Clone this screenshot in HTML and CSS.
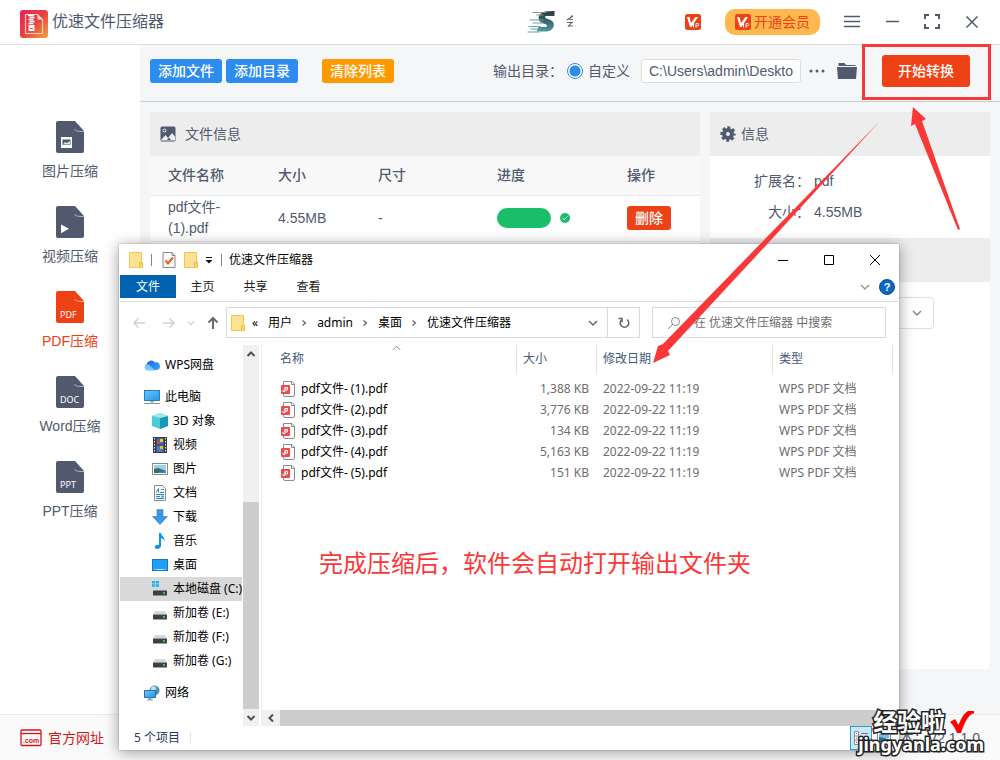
FILE: index.html
```html
<!DOCTYPE html>
<html lang="zh-CN">
<head>
<meta charset="utf-8">
<title>优速文件压缩器</title>
<link rel="stylesheet" href="styles.css">
</head>
<body>
<svg class="defs" aria-hidden="true">
  <defs>
    <linearGradient id="logo-bg" x1="0" y1="0" x2="1" y2="1"><stop offset="0" stop-color="#e5235b"/><stop offset=".5" stop-color="#e8413f"/><stop offset="1" stop-color="#f3a63b"/></linearGradient>
    <linearGradient id="speed" x1="0" y1="0" x2="0" y2="1"><stop offset="0" stop-color="#27343c"/><stop offset="1" stop-color="#4f9a9c"/></linearGradient>
    <linearGradient id="cloud" x1="0" y1="0" x2="1" y2="1"><stop offset="0" stop-color="#1b5fe0"/><stop offset="1" stop-color="#35a8ff"/></linearGradient>
    <linearGradient id="screen" x1="0" y1="0" x2="1" y2="1"><stop offset="0" stop-color="#6cc6ff"/><stop offset="1" stop-color="#1f96ea"/></linearGradient>
    <symbol id="doc" viewBox="0 0 28 32"><path fill="currentColor" d="M2 0h17l9 10v20a2 2 0 0 1-2 2H2a2 2 0 0 1-2-2V2a2 2 0 0 1 2-2z"/><path d="M18.500 8c1.500 2.200 3 2.500 9.500 2.500" fill="none" stroke="#fff" stroke-width=".7" opacity=".8"/></symbol>
    <symbol id="vip" viewBox="0 0 16 16"><rect width="16" height="16" rx="2.500" fill="#ee4115"/><path d="M2 3h2.500l1.500 6 4.500-6H13L6.500 13H5z" fill="#fff"/><path d="M8.500 13.500v-4M11 13.500v-4h1.500q1.300 0 1.300 1.100t-1.300 1.200H11" fill="none" stroke="#fff"/></symbol>
    <symbol id="folder" viewBox="0 0 14 16"><path d="M.5 .5h12v9l1 1v5H.5z" fill="#fde295" stroke="#efc84a"/><path d="M10.500 15.500v-5h3v5" fill="#f7d673" stroke="#e8bf3f"/></symbol>
    <symbol id="pdf" viewBox="0 0 16 16"><path d="M3.500 .5h8.500l2.500 2.500v11q0 1.500-1.500 1.500H5q-1.500 0-1.500-1.500z" fill="#fff" stroke="#8b8b8b"/><path d="M11.500 1v2.500H14" fill="none" stroke="#8b8b8b"/><rect x="1" y="4" width="9" height="9" rx="1" fill="#ea4c50"/><path d="M5 6.500h2.500v2.500H5zM5 6.500v4H3V9" fill="none" stroke="#fff"/></symbol>
    <symbol id="drive" viewBox="0 0 16 16"><path d="M3 6h10l2 3.500H1z" fill="#d5d7d9"/><rect x="1" y="9.500" width="14" height="5" rx=".5" fill="#3d4144"/><path d="M11 12h2" stroke="#4ee35a" stroke-width="1.500"/></symbol>
    <symbol id="chev" viewBox="0 0 10 10"><path d="M1 3l4 4 4-4" fill="none" stroke="currentColor" stroke-width="1.500"/></symbol>
    <symbol id="chev-right" viewBox="0 0 10 10"><path d="M3.500 2.500l3 2.500-3 2.500" fill="none" stroke="currentColor" stroke-width="1.300"/></symbol>
    <symbol id="scroll-mark" viewBox="0 0 10 10"><path d="M1.500 7L5 3.500 8.500 7" fill="none" stroke="#505050" stroke-width="2"/></symbol>
  </defs>
</svg>

<div class="app">
  <header class="topbar">
    <svg class="logo" viewBox="0 0 28 28"><rect width="28" height="28" rx="3" fill="url(#logo-bg)"/><path d="M5.500 4.500h12l5 5v14h-17z" fill="none" stroke="#ffc9bd" stroke-width="1.200"/><path d="M17.500 4.500v5h5z" fill="#ffd9cf"/><path d="M8 5.500h6M9.500 7.500h5M8.500 9.500h5M9.500 11.500h5M8.500 13.500h5" stroke="#fff" stroke-width="1.400"/><path d="M8.500 15h6v6h-6z" fill="#fff"/><path d="M10 18.500h3" stroke="#e8413f"/></svg>
    <h1 class="app-title">优速文件压缩器</h1>
    <div class="user">
      <svg class="avatar" viewBox="0 0 28 24"><path d="M27 1v5H18.500c-1.500 0-1 2 .5 2.500l4 1.500c6 2.500 3.500 11.500-4 11.500H9l2-4.500h7c2 0 2-2 .5-2.500l-4-1.500C8.500 10.500 11 2.500 18 1.500z" fill="url(#speed)"/><path d="M5 2.500h14M9 5h7" stroke="#8a9399" stroke-width="1"/><path d="M2 10h14M5 13h11M1 16.500h12M3 19h10M0 22h12" stroke="#6ba4a6" stroke-width="1.200"/></svg>
      <span class="username">会</span>
    </div>
    <svg class="vip-mark"><use href="#vip"/></svg>
    <button class="vip-btn"><svg><use href="#vip"/></svg>开通会员</button>
    <button class="icon-btn" aria-label="菜单"><svg viewBox="0 0 16 16"><path d="M0 2.500h16M0 7.500h16M0 12.500h16" stroke-width="1.500"/></svg></button>
    <button class="icon-btn" aria-label="最小化"><svg viewBox="0 0 16 16"><path d="M2 7.500h13" stroke-width="1.500"/></svg></button>
    <button class="icon-btn" aria-label="最大化"><svg viewBox="0 0 16 16"><path d="M1 5V1h4M11 1h4v4M15 10v4h-4M5 14H1v-4" stroke-width="2"/></svg></button>
    <button class="icon-btn" aria-label="关闭"><svg viewBox="0 0 16 16"><path d="M2.500 2.500l11 11M13.500 2.500l-11 11" stroke-width="1.500"/></svg></button>
  </header>

  <div class="middle">
    <nav class="sidebar">
      <a href="#"><svg viewBox="0 0 28 32"><use href="#doc"/><path d="M5 16h11v11H5z" fill="#fff"/><path d="M6.500 18.500h8v5.500h-8z" fill="#50596d"/><path d="M7 23.500l2-2.500 2 1 3-2v3.500z" fill="#dfe2e8"/></svg>图片压缩</a>
      <a href="#"><svg viewBox="0 0 28 32"><use href="#doc"/><path d="M5 18.500l8 4.300-8 4.500z" fill="#fff"/></svg>视频压缩</a>
      <a href="#" class="active"><svg viewBox="0 0 28 32"><use href="#doc"/><text x="4" y="27">PDF</text></svg>PDF压缩</a>
      <a href="#"><svg viewBox="0 0 28 32"><use href="#doc"/><text x="4" y="27">DOC</text></svg>Word压缩</a>
      <a href="#"><svg viewBox="0 0 28 32"><use href="#doc"/><text x="4" y="27">PPT</text></svg>PPT压缩</a>
    </nav>

    <main class="main">
      <div class="toolbar">
        <button class="btn blue">添加文件</button>
        <button class="btn blue">添加目录</button>
        <button class="btn orange">清除列表</button>
        <span class="out-label">输出目录：</span>
        <label class="radio"><input type="radio" name="out" checked>自定义</label>
        <input class="path" type="text" value="C:\Users\admin\Deskto" aria-label="输出目录">
        <button class="plain dots" aria-label="更多"><svg viewBox="0 0 16 4"><circle cx="2" cy="2" r="1.500"/><circle cx="8" cy="2" r="1.500"/><circle cx="14" cy="2" r="1.500"/></svg></button>
        <button class="plain dir" aria-label="打开目录"><svg viewBox="0 0 20 18"><path d="M1.500 4V1h6l1.500 2h9.500v1z"/><path d="M0 5h20l-1 12H1z"/></svg></button>
        <button class="start">开始转换</button>
      </div>

      <div class="content">
        <section class="panel files">
          <h2><svg viewBox="0 0 16 16"><rect x=".5" y=".5" width="15" height="15" rx="1.500" fill="#50596d"/><circle cx="4.500" cy="4.500" r="1.500" fill="none" stroke="#eee"/><path d="M1 14l4.500-5 2.500 3 4-5 3 3.500v4H1z" fill="#eee"/><path d="M7 14l2-2.500 2 2.500" fill="#50596d"/></svg>文件信息</h2>
          <table class="file-table">
            <colgroup><col class="c-name"><col class="c-size"><col class="c-dim"><col class="c-prog"><col></colgroup>
            <thead><tr><th>文件名称</th><th>大小</th><th>尺寸</th><th>进度</th><th>操作</th></tr></thead>
            <tbody><tr>
              <td>pdf文件- (1).pdf</td><td>4.55MB</td><td>-</td>
              <td><div class="progress"><span class="bar"></span><svg viewBox="0 0 10 10"><circle cx="5" cy="5" r="5" fill="#19be6b"/><path d="M2.700 5.200l1.600 1.600 3-3.300" fill="none" stroke="#fff"/></svg></div></td>
              <td><button class="btn red">删除</button></td>
            </tr></tbody>
          </table>
        </section>
        <section class="panel info">
          <h2><svg viewBox="0 0 16 16" fill="none" stroke="#50596d"><circle cx="8" cy="8" r="4" stroke-width="4"/><circle cx="8" cy="8" r="6.400" stroke-width="2.600" stroke-dasharray="2.900 2.126" stroke-dashoffset="1.450"/></svg>信息</h2>
          <dl><dt>扩展名：</dt><dd>pdf</dd><dt>大小：</dt><dd>4.55MB</dd></dl>
          <h2 aria-label="设置"></h2>
          <div class="option"><select aria-label="压缩设置"><option></option></select><svg><use href="#chev"/></svg></div>
        </section>
      </div>
    </main>
  </div>

  <footer class="footer">
    <a href="#"><svg viewBox="0 0 22 18"><rect x="1" y="1" width="20" height="15.500" rx="1" fill="none" stroke="#d2161b" stroke-width="1.300"/><path d="M1 4.500h20" stroke="#d2161b" stroke-width="1.300"/><text x="3" y="14">.com</text></svg>官方网址</a>
    <span>版本：V2.1.1.0</span>
  </footer>

  <section class="explorer" aria-label="优速文件压缩器">
    <div class="ex-title">
      <svg class="w14"><use href="#folder"/></svg><i class="sep"></i>
      <svg class="w14 check" viewBox="0 0 14 16"><path d="M1 .5h9l3 3v12H1z" fill="#fbfbfb" stroke="#8a8a8a"/><path d="M10 .5v3h3" fill="none" stroke="#8a8a8a"/><path d="M3.500 8.500l2.500 3 5-6" fill="none" stroke="#ee5a24" stroke-width="2"/></svg>
      <svg class="w14"><use href="#folder"/></svg>
      <svg class="drop" viewBox="0 0 8 8"><path d="M1 1.500h6" stroke="#111"/><path d="M.5 4h7L4 7.500z" fill="#111"/></svg>
      <i class="sep"></i><strong>优速文件压缩器</strong>
      <div class="win-btns">
        <button aria-label="最小化"><svg viewBox="0 0 12 12"><path d="M1 6.500h10"/></svg></button>
        <button aria-label="最大化"><svg viewBox="0 0 12 12"><path d="M1.500 1.500h9v9h-9z"/></svg></button>
        <button aria-label="关闭"><svg viewBox="0 0 12 12"><path d="M1 1l10 10M11 1L1 11"/></svg></button>
      </div>
    </div>
    <div class="ex-tabs">
      <button class="on">文件</button><button>主页</button><button>共享</button><button>查看</button>
      <svg class="fold"><use href="#chev"/></svg>
      <svg class="help" viewBox="0 0 16 16"><circle cx="8" cy="8" r="7.500" fill="#0a68c4" stroke="#0b4d94"/><text x="8" y="12">?</text></svg>
    </div>
    <div class="ex-address">
      <svg class="nav-arrow" viewBox="0 0 14 14"><path d="M13 7H2M6.500 2.500L2 7l4.500 4.500"/></svg>
      <svg class="nav-arrow" viewBox="0 0 14 14"><path d="M1 7h11M7.500 2.500L12 7l-4.500 4.500"/></svg>
      <svg class="nav-more"><use href="#chev"/></svg>
      <svg class="nav-up" viewBox="0 0 14 14"><path d="M7 13V2M2.500 6.500L7 2l4.500 4.500"/></svg>
      <div class="crumbs">
        <svg class="w14"><use href="#folder"/></svg><span class="dbl">«</span><span>用户</span><svg class="sm"><use href="#chev-right"/></svg><span>admin</span><svg class="sm"><use href="#chev-right"/></svg><span>桌面</span><svg class="sm"><use href="#chev-right"/></svg><span>优速文件压缩器</span>
        <svg class="sm open"><use href="#chev"/></svg>
        <button aria-label="刷新"><svg viewBox="0 0 12 12"><path d="M9 2.500A4.300 4.300 0 1 1 4 2.500M4 5.200V1.500H.5"/></svg></button>
      </div>
      <label class="search"><svg viewBox="0 0 14 14"><circle cx="8.500" cy="5.500" r="4"/><path d="M5.700 8.300L1 13"/></svg><input type="text" placeholder="在 优速文件压缩器 中搜索" aria-label="搜索"></label>
    </div>
    <div class="ex-body">
      <ul class="tree">
        <li><svg viewBox="0 0 16 16"><path d="M3 13a3 3 0 0 1-.5-5.500A4.800 4.800 0 0 1 11 5.500 3.700 3.700 0 0 1 13 13z" fill="url(#cloud)"/><path d="M3.500 13.500a3 3 0 1 1 2.800-4.500L11 13.500z" fill="#7cc6ff"/></svg>WPS网盘</li>
        <li class="gap"><svg viewBox="0 0 16 16"><rect x=".5" y="1.500" width="15" height="10" fill="url(#screen)" stroke="#2c7cb8"/><path d="M6.500 12h3v1.500h-3zM0 14h16v1H0z" fill="#8a98a3"/></svg>此电脑</li>
        <li class="sub"><svg viewBox="0 0 16 16"><path d="M0 3l8-3 8 3v10l-8 3-8-3z" fill="#4fcbd8"/><path d="M8 5l8-2v10l-8 3z" fill="#1599b5"/><path d="M0 3l8-3 8 3-8 2z" fill="#9be8ec"/></svg>3D 对象</li>
        <li class="sub"><svg viewBox="0 0 16 16"><path d="M1 0h14v16H1z" fill="#3b3b3b"/><path d="M2.500 1v15M13.500 1v15" stroke="#e6e6e6" stroke-dasharray="1.500 1.500"/><path d="M4.500 1h7v6.500h-7z" fill="#2f6fc4"/><path d="M5 4h3v3H5z" fill="#d74b36"/><path d="M8 2h3v3H8z" fill="#f3c53b"/><path d="M4.500 8.500h7V15h-7z" fill="#4477d5"/><path d="M8 9h3v3H8z" fill="#efb73c"/></svg>视频</li>
        <li class="sub"><svg viewBox="0 0 16 16"><rect x=".5" y="2.500" width="15" height="11" fill="#fff" stroke="#8c8c8c"/><path d="M2 4h12v8H2z" fill="#9ccdf1"/><path d="M2 8l4-1 8 3v2H2z" fill="#35705c"/><path d="M6 11l8-1v2H6z" fill="#2d88c8"/></svg>图片</li>
        <li class="sub"><svg viewBox="0 0 16 16"><path d="M2.500 .5h8l3 3v12h-11z" fill="#fff" stroke="#8b8b8b"/><path d="M4 7.500l2.500-4v4M9 4.500h3M8 7.500h4M4 9.500h8M4 11.500h4M4 13.500h8" fill="none" stroke="#2488c7"/><path d="M9 10.500h3v2H9z" fill="#5fa0cf"/></svg>文档</li>
        <li class="sub"><svg viewBox="0 0 16 16"><path d="M5 .5h6v7h4.500L8 15.500.5 7.500H5z" fill="#3f97e4" stroke="#2f7fc8" stroke-width=".6"/></svg>下载</li>
        <li class="sub"><svg viewBox="0 0 16 16"><path d="M7 0h2c0 3 4.500 4 3.500 8.500C12 6 10.500 5.500 9 5.500V12.500c0 2-1.500 3.500-4 3.500s-3-2.500-1-3.700c1-.6 2-.7 3-.3z" fill="#1096ec"/></svg>音乐</li>
        <li class="sub"><svg viewBox="0 0 16 16"><rect x=".5" y="2.500" width="15" height="11" fill="#1aa0f5" stroke="#117bc5"/><path d="M2 12.500h1M4 12.500h8M13 12.500h1" stroke="#bfe4ff"/></svg>桌面</li>
        <li class="sub sel"><svg viewBox="0 0 16 16"><use href="#drive"/><path d="M0 0h3v2.500H0zM3.700 0H7v2.500H3.700zM0 3.200h3v2.500H0zM3.700 3.200H7v2.500H3.700z" fill="#1bb3ee"/></svg>本地磁盘 (C:)</li>
        <li class="sub"><svg><use href="#drive"/></svg>新加卷 (E:)</li>
        <li class="sub"><svg><use href="#drive"/></svg>新加卷 (F:)</li>
        <li class="sub"><svg><use href="#drive"/></svg>新加卷 (G:)</li>
        <li class="gap"><svg viewBox="0 0 16 16"><circle cx="10.500" cy="5.500" r="5" fill="#4f8fb4"/><path d="M8 1.500c3-1 5 1 4 3s-3 1-4 3-2-4 0-6z" fill="#bfe0ee"/><path d="M.5 5.500h11v7H.5z" fill="url(#screen)" stroke="#2c6da3"/><path d="M5 13h2v1.500H5zM3 15h6" fill="#5b8fb5" stroke="#7fa3bd"/></svg>网络</li>
      </ul>
      <div class="vscroll"><svg><use href="#scroll-mark"/></svg><i></i><svg class="down"><use href="#scroll-mark"/></svg></div>
      <div class="list">
        <table>
          <colgroup><col><col class="l-size"><col class="l-date"><col class="l-type"></colgroup>
          <thead><tr><th>名称<svg class="sort" viewBox="0 0 10 6"><path d="M1 5l4-4 4 4" fill="none" stroke="#777"/></svg></th><th>大小</th><th>修改日期</th><th>类型</th></tr></thead>
          <tbody>
            <tr><td><svg><use href="#pdf"/></svg>pdf文件- (1).pdf</td><td>1,388 KB</td><td>2022-09-22 11:19</td><td>WPS PDF 文档</td></tr>
            <tr><td><svg><use href="#pdf"/></svg>pdf文件- (2).pdf</td><td>3,776 KB</td><td>2022-09-22 11:19</td><td>WPS PDF 文档</td></tr>
            <tr><td><svg><use href="#pdf"/></svg>pdf文件- (3).pdf</td><td>134 KB</td><td>2022-09-22 11:19</td><td>WPS PDF 文档</td></tr>
            <tr><td><svg><use href="#pdf"/></svg>pdf文件- (4).pdf</td><td>5,163 KB</td><td>2022-09-22 11:19</td><td>WPS PDF 文档</td></tr>
            <tr><td><svg><use href="#pdf"/></svg>pdf文件- (5).pdf</td><td>151 KB</td><td>2022-09-22 11:19</td><td>WPS PDF 文档</td></tr>
          </tbody>
        </table>
        <p class="note">完成压缩后，软件会自动打开输出文件夹</p>
        <div class="hscroll"><svg><use href="#scroll-mark"/></svg><i></i></div>
      </div>
    </div>
    <div class="ex-status">
      <span>5 个项目</span><i></i>
      <svg class="view" viewBox="0 0 22 24"><rect x=".5" y=".5" width="21" height="23" fill="#cce8f6" stroke="#26a0da"/><path d="M4.500 5.500h4v13h-4zM4.500 10h4M4.500 14h4" fill="#fff" stroke="#8a8a8a"/><path d="M6 7.500h1M6 12h1" stroke="#2b7ec0"/><path d="M6 16.500h1" stroke="#d33"/><path d="M11 7.500h7M11 12h7M11 16.500h7" stroke="#777"/></svg>
      <svg class="thumb" viewBox="0 0 14 12"><path d="M.5 .5h13v11H.5z" fill="#fff" stroke="#8c8c8c"/><path d="M2 2h10v4H2z" fill="#7bbbe8"/><path d="M2 5l10 2v3H2z" fill="#2c6f8a"/></svg>
    </div>
  </section>

  <div class="highlight"></div>
  <svg class="arrows" viewBox="0 0 1000 760" aria-hidden="true"><path fill="#fb3838" d="M880 121L764 240 663 344 658 346 653 363 670 355 668 351 771 240zM913 107L911 126 915 124 958 230 960 229 922 121 926 119z"/></svg>
  <div class="watermark">
    <div class="wm-top">经验啦<svg viewBox="0 0 24 24"><path d="M0 12l5-3 3.500 6C11 9 14 3 18 1h6v2.500c-5 0-9 8-13 19.500H7C5.500 19 3.500 15 0 12z" fill="#f00"/></svg></div>
    <div class="wm-site">jingyanla.com</div>
  </div>
</div>
</body>
</html>
```
FILE: styles.css
```css
* { box-sizing: border-box; }
body {
  margin: 0;
  font: 14px/20px "Liberation Sans", "Noto Sans CJK SC", sans-serif;
  color: #515a6e;
}
button, input, select { font: inherit; color: inherit; margin: 0; padding: 0; border: 0; background: none; }
svg { display: block; flex: none; }
a { color: inherit; text-decoration: none; }
.defs { position: absolute; width: 0; height: 0; }

.app { position: relative; display: flex; flex-direction: column; min-height: 100vh; overflow: hidden; background: #f5f6f8; }

/* top bar */
.topbar { display: flex; align-items: center; gap: 24px; height: 45px; padding: 0 20px; background: #fff; border-bottom: 1px solid #dcdee2; }
.logo { width: 28px; height: 28px; margin-top: 3px; }
.app-title { margin: 0 0 0 -20px; font-size: 16px; font-weight: 400; }
.user { display: flex; align-items: center; gap: 10px; margin-left: auto; margin-right: 88px; }
.avatar { width: 29px; height: 24px; }
.username { width: 7px; overflow: hidden; white-space: nowrap; font-size: 12px; }
.vip-mark { width: 16px; height: 16px; }
.vip-btn { display: flex; align-items: center; justify-content: center; gap: 3px; width: 95px; height: 26px; border-radius: 10px; background: #ffb850; color: #ee4115; }
.vip-btn svg { width: 16px; height: 16px; }
.icon-btn { width: 16px; height: 16px; }
.icon-btn svg { width: 16px; height: 16px; fill: none; stroke: #515a6e; }

/* left navigation */
.middle { display: flex; flex: 1; }
.sidebar { display: flex; flex-direction: column; gap: 25px; width: 140px; padding-top: 76px; background: #fff; }
.sidebar a { display: flex; flex-direction: column; align-items: center; gap: 8px; }
.sidebar svg { width: 28px; height: 32px; color: #50596d; }
.sidebar text { font: 9px "Noto Sans", sans-serif; fill: #fff; }
.sidebar .active, .sidebar .active svg { color: #ee4115; }

/* toolbar */
.main { display: flex; flex-direction: column; flex: 1; min-width: 0; }
.toolbar { display: flex; align-items: center; padding: 10px 20px 14px 10px; border-bottom: 1px solid #c9ccd2; }
.btn { height: 24px; border-radius: 3px; color: #fff; font-weight: 500; }
.toolbar .btn { width: 72px; }
.blue { background: #2d8cf0; }
.blue + .blue { margin-left: 4px; }
.orange { margin-left: 24px; background: #f90; }
.red { width: 44px; background: #ee4115; }
.out-label { margin-left: auto; }
.radio { display: flex; align-items: center; gap: 5px; margin-left: 4px; }
.radio input { appearance: none; width: 16px; height: 16px; border: 1px solid #2d8cf0; border-radius: 50%; background: radial-gradient(circle, #2d8cf0 5px, #fff 6px); }
.path { width: 160px; height: 24px; margin-left: 11px; padding: 0 0 0 7px; border: 1px solid #dcdee2; border-radius: 3px; background: #fff; }
.plain svg { fill: #50596d; }
.dots { margin-left: 8px; }
.dots svg { width: 16px; height: 4px; }
.dir { margin-left: 12px; }
.dir svg { width: 20px; height: 18px; }
.start { width: 88px; height: 32px; margin: 0 10px 0 25px; border-radius: 3px; background: #ee4115; color: #fff; font-weight: 500; }

/* panels */
.content { display: flex; flex: 1; gap: 10px; padding: 10px 10px 45px; }
.panel { background: #fff; }
.panel h2 { display: flex; align-items: center; gap: 9px; height: 44px; margin: 0; padding: 0 10px; background: #ededed; font-size: 14px; font-weight: 400; }
.panel h2 svg { width: 16px; height: 16px; }
.files { flex: 1; min-width: 0; }
.info { width: 280px; }
.info h2 { gap: 5px; }
.file-table { width: 100%; table-layout: fixed; border-collapse: collapse; line-height: 21px; }
.c-name { width: 110px; }
.c-size { width: 100px; }
.c-dim { width: 119px; }
.c-prog { width: 130px; }
.file-table th, .file-table td { padding: 2px 18px; text-align: left; border-bottom: 1px solid #e8eaec; }
.file-table th { height: 39px; background: #f8f8f9; font-weight: 500; }
.file-table td { height: 46px; padding: 1px 18px; }
.progress { display: flex; align-items: center; gap: 9px; }
.bar { width: 54px; height: 20px; border-radius: 10px; background: #19be6b; }
.progress svg { width: 10px; height: 10px; }
.info dl { display: grid; grid-template-columns: 100px 1fr; column-gap: 4px; margin: 0; padding: 10px 0; line-height: 31px; }
.info dt { text-align: right; }
.info dd { margin: 0; }
.option { position: relative; width: 180px; margin: 15px 0 0 44px; }
.option select { appearance: none; width: 100%; height: 32px; border: 1px solid #dcdee2; border-radius: 4px; background: #fff; }
.option svg { position: absolute; right: 12px; top: 11px; width: 10px; height: 10px; color: #808695; }

/* footer */
.footer { display: flex; align-items: center; justify-content: space-between; height: 46px; padding: 0 20px; background: #fafafa; border-top: 1px solid #e8eaec; }
.footer a { display: flex; align-items: center; gap: 6px; color: #d2161b; }
.footer svg { width: 22px; height: 18px; }
.footer text { font: bold 7px "Liberation Sans", sans-serif; fill: #d2161b; }

/* file explorer window */
.explorer { position: absolute; left: 119px; right: 101px; top: 244px; padding: 0 1px; background: #fff; color: #000; font: 12px/20px "Noto Sans", "Noto Sans CJK SC", sans-serif; box-shadow: 0 2px 14px rgba(0, 0, 0, .4), 0 0 1px rgba(0, 0, 0, .5); }
.w14 { width: 14px; height: 16px; }
.ex-title { display: flex; align-items: center; height: 31px; padding-left: 9px; }
.ex-title strong { margin-left: 7px; font-weight: 400; }
.sep { width: 1px; height: 12px; margin-left: 8px; background: #888; }
.check { margin: 0 8px 0 10px; }
.drop { width: 8px; height: 8px; margin-left: 7px; }
.win-btns { display: flex; margin-left: auto; }
.win-btns button { display: flex; align-items: center; justify-content: center; width: 46px; height: 30px; }
.win-btns svg { width: 12px; height: 12px; fill: none; stroke: #000; }
.ex-tabs { display: flex; align-items: center; padding: 0 3px 3px 0; border-bottom: 1px solid #dadbdc; }
.ex-tabs button { width: 53px; height: 23px; color: #222; }
.ex-tabs .on { width: 56px; background: #0063b1; color: #fff; }
.fold { width: 10px; height: 10px; margin-left: auto; color: #999; }
.help { width: 16px; height: 16px; margin-left: 9px; }
.help text { font: bold 11px "Liberation Sans", sans-serif; fill: #fff; text-anchor: middle; }
.ex-address { display: flex; align-items: center; padding: 5px 12px 7px; }
.nav-arrow, .nav-up { width: 14px; height: 14px; margin-right: 16px; fill: none; stroke: #d2d2d2; stroke-width: 1.5; }
.nav-arrow + .nav-arrow { margin-right: 11px; }
.nav-more { width: 8px; height: 8px; margin-right: 11px; color: #d0d0d0; }
.nav-up { margin-right: 6px; stroke: #6a6a6a; stroke-width: 2; }
.crumbs { display: flex; align-items: center; flex: 1; height: 31px; padding-left: 4px; border: 1px solid #d9d9d9; }
.sm { width: 10px; height: 10px; margin: 0 8px 0 7px; color: #666; }
.dbl { margin: 0 10px 0 7px; }
.open { margin: 0 9px 0 auto; }
.crumbs button { display: flex; align-items: center; justify-content: center; align-self: stretch; width: 32px; border-left: 1px solid #d9d9d9; }
.crumbs button svg { width: 12px; height: 12px; fill: none; stroke: #666; stroke-width: 1.5; }
.search { display: flex; align-items: center; gap: 13px; width: 234px; height: 31px; margin-left: 12px; padding-left: 14px; border: 1px solid #d9d9d9; }
.search svg { width: 14px; height: 14px; fill: none; stroke: #888; }
.search input { flex: 1; min-width: 0; outline: 0; }
.search input::placeholder { color: #6d6d6d; opacity: 1; }

.ex-body { display: flex; }
.tree { width: 123px; margin: 0; padding: 8px 1px 21px 0; overflow: hidden; list-style: none; }
.tree li { display: flex; align-items: center; gap: 5px; height: 24px; padding-left: 24px; white-space: nowrap; overflow: hidden; }
.tree li.gap { margin-top: 8px; }
.tree li.sub { padding-left: 32px; }
.tree li.sel { background: #d9d9d9; }
.tree svg { width: 16px; height: 16px; }
.vscroll { display: grid; grid-template-rows: 157px 1fr 17px; justify-items: center; width: 16px; background: #f0f0f0; }
.vscroll svg, .hscroll svg { width: 10px; height: 10px; margin-top: 4px; }
.vscroll i { width: 100%; background: #cdcdcd; }
.vscroll .down { transform: rotate(180deg); }
.list { display: flex; flex-direction: column; flex: 1; min-width: 0; margin-left: 2px; border-left: 1px solid #ececec; }
.list table { width: 100%; padding-right: 5px; table-layout: fixed; border-spacing: 0; }
.l-size { width: 80px; }
.l-date { width: 176px; }
.l-type { width: 120px; }
.list th { position: relative; height: 28px; padding: 0 6px; border-right: 1px solid #e2e2e2; color: #44597a; font-weight: 400; text-align: left; }
.list th:first-child, .list td:first-child { padding-left: 18px; }
.list tbody::before { content: ""; display: block; height: 5px; }
.list td { height: 21px; padding: 0 6px; color: #6d6d6d; white-space: nowrap; }
.list td:first-child { display: flex; align-items: center; gap: 5px; color: #000; }
.list td svg { width: 16px; height: 16px; }
.list td:nth-child(2) { padding-right: 8px; text-align: right; }
.sort { position: absolute; left: 51%; top: 0; width: 9px; height: 6px; }
.note { margin: 62px 0 0 57px; color: #fb3838; font-size: 24px; line-height: 36px; }
.hscroll { display: flex; height: 16px; margin-top: auto; padding-right: 22px; background: #f0f0f0; }
.hscroll svg { margin: 3px 4px; transform: rotate(-90deg); }
.hscroll i { flex: 1; background: #cdcdcd; }
.ex-status { display: flex; align-items: center; height: 24px; padding-left: 14px; color: #1e395b; }
.ex-status i { width: 1px; height: 12px; margin-left: 10px; background: #e2e2e2; }
.view { width: 22px; height: 24px; margin-left: auto; }
.thumb { width: 14px; height: 12px; margin: 0 7px 0 5px; }

/* annotations over the windows */
.highlight { position: absolute; top: 44px; right: 9px; width: 129px; height: 56px; border: 3px solid #fb3838; }
.arrows { position: absolute; top: 0; left: 0; width: 100%; pointer-events: none; }
.watermark { position: absolute; right: 16px; bottom: 6px; color: #fff; font-family: "Noto Sans", "Noto Sans CJK SC", sans-serif; font-weight: 700; -webkit-text-stroke: 3px #222; paint-order: stroke fill; }
.wm-top { display: flex; align-items: center; gap: 5px; padding-left: 15px; font-size: 24px; line-height: 24px; }
.wm-top svg { width: 24px; height: 24px; }
.wm-site { font-size: 18px; line-height: 20px; }
```
